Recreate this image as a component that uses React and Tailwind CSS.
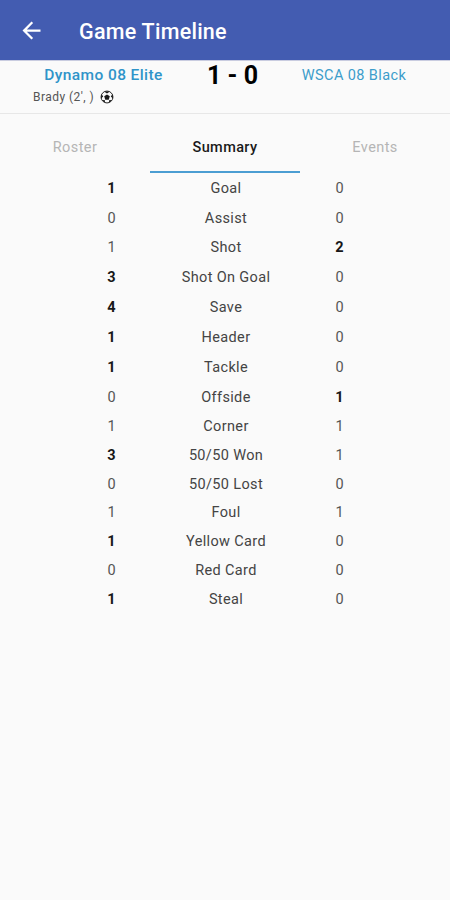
const STATS = [
  { label: 'Goal', home: 1, away: 0, height: 'h-[29px]' },
  { label: 'Assist', home: 0, away: 0, height: 'h-[30px]' },
  { label: 'Shot', home: 1, away: 2, height: 'h-[29px]' },
  { label: 'Shot On Goal', home: 3, away: 0, height: 'h-[30px]' },
  { label: 'Save', home: 4, away: 0, height: 'h-[30px]' },
  { label: 'Header', home: 1, away: 0, height: 'h-[30px]' },
  { label: 'Tackle', home: 1, away: 0, height: 'h-[30px]' },
  { label: 'Offside', home: 0, away: 1, height: 'h-[30px]' },
  { label: 'Corner', home: 1, away: 1, height: 'h-[29px]' },
  { label: '50/50 Won', home: 3, away: 1, height: 'h-[29px]' },
  { label: '50/50 Lost', home: 0, away: 0, height: 'h-[28px]' },
  { label: 'Foul', home: 1, away: 1, height: 'h-[29px]' },
  { label: 'Yellow Card', home: 1, away: 0, height: 'h-[29px]' },
  { label: 'Red Card', home: 0, away: 0, height: 'h-[29px]' },
  { label: 'Steal', home: 1, away: 0, height: 'h-[29px]' },
]

const TABS = ['Roster', 'Summary', 'Events']

function BackIcon() {
  return (
    <svg viewBox="0 0 24 24" className="w-[27px] h-[27px]" fill="currentColor">
      <path d="M20 11H7.83l5.59-5.59L12 4l-8 8 8 8 1.41-1.41L7.83 13H20v-2z" />
    </svg>
  )
}

function BallIcon() {
  return (
    <svg viewBox="0 0 24 24" className="w-[14px] h-[14px]" fill="#1a1a1a">
      <circle cx="12" cy="12" r="10.2" fill="none" stroke="#1a1a1a" strokeWidth="1.6" />
      <path d="M12 7.500l4.800 3.400-1.800 5.600H9l-1.800-5.600z" />
      <path d="M7 2.500h10L12 6zM21.500 7l1 8-4-4zM2.500 7l-1 8 4-4zM20.500 17.500l-5.500 4.500 1-5zM3.500 17.500L9 22l-1-5z" />
    </svg>
  )
}

function StatRow({ label, home, away, height }) {
  const value = (n, other) => (
    <span className={n > other ? 'font-bold text-[#171717]' : 'text-[#555]'}>{n}</span>
  )

  return (
    <div className={`grid grid-cols-[63px_166px_61px] items-center text-center text-[14.5px] leading-[20px] ${height}`}>
      {value(home, away)}
      <span className="tracking-[0.35px] text-[#444]">{label}</span>
      {value(away, home)}
    </div>
  )
}

export default function App() {
  return (
    <div className="w-[450px] h-[900px] overflow-hidden bg-[#fafafa] font-['Roboto',sans-serif]">
      <header className="flex items-center h-[60px] pt-[1px] pl-[18px] bg-[#435cb1] text-white">
        <BackIcon />
        <h1 className="ml-[34px] pt-[3px] text-[21.5px] font-medium tracking-[0.25px]">Game Timeline</h1>
      </header>

      <section className="h-[54px] border-t border-b border-t-[#c9cce0] border-b-[#e7e7e7]">
        <div className="grid grid-cols-[207px_51px_192px] items-center h-[27px]">
          <span className="pt-[2px] text-center text-[15.5px] font-medium text-[#2f94c9] tracking-[0.4px]">Dynamo 08 Elite</span>
          <span className="pt-[1px] text-center text-[25px] leading-[27px] font-bold text-black whitespace-nowrap">1 - 0</span>
          <span className="pt-[2px] text-center text-[14.5px] text-[#3c9dcb] tracking-[0.4px]">WSCA 08 Black</span>
        </div>
        <div className="flex items-center h-[18px] pl-[33px] gap-[6px] text-[12px] tracking-[0.45px] text-[#555]">
          <span>Brady (2', )</span>
          <BallIcon />
        </div>
      </section>

      <nav className="grid grid-cols-3 h-[59px] text-[14.5px] text-center">
        {TABS.map((tab) => (
          <button
            key={tab}
            className={`pb-[4px] pt-[14px] border-b-2 tracking-[0.4px] ${
              tab === 'Summary'
                ? 'border-[#4b9dd2] text-[#1a1a1a] font-medium'
                : 'border-transparent text-[#b5b5b5]'
            }`}
          >
            {tab}
          </button>
        ))}
      </nav>

      <main className="pt-[1.75px] pl-[80px]">
        {STATS.map((stat) => (
          <StatRow key={stat.label} {...stat} />
        ))}
      </main>
    </div>
  )
}
